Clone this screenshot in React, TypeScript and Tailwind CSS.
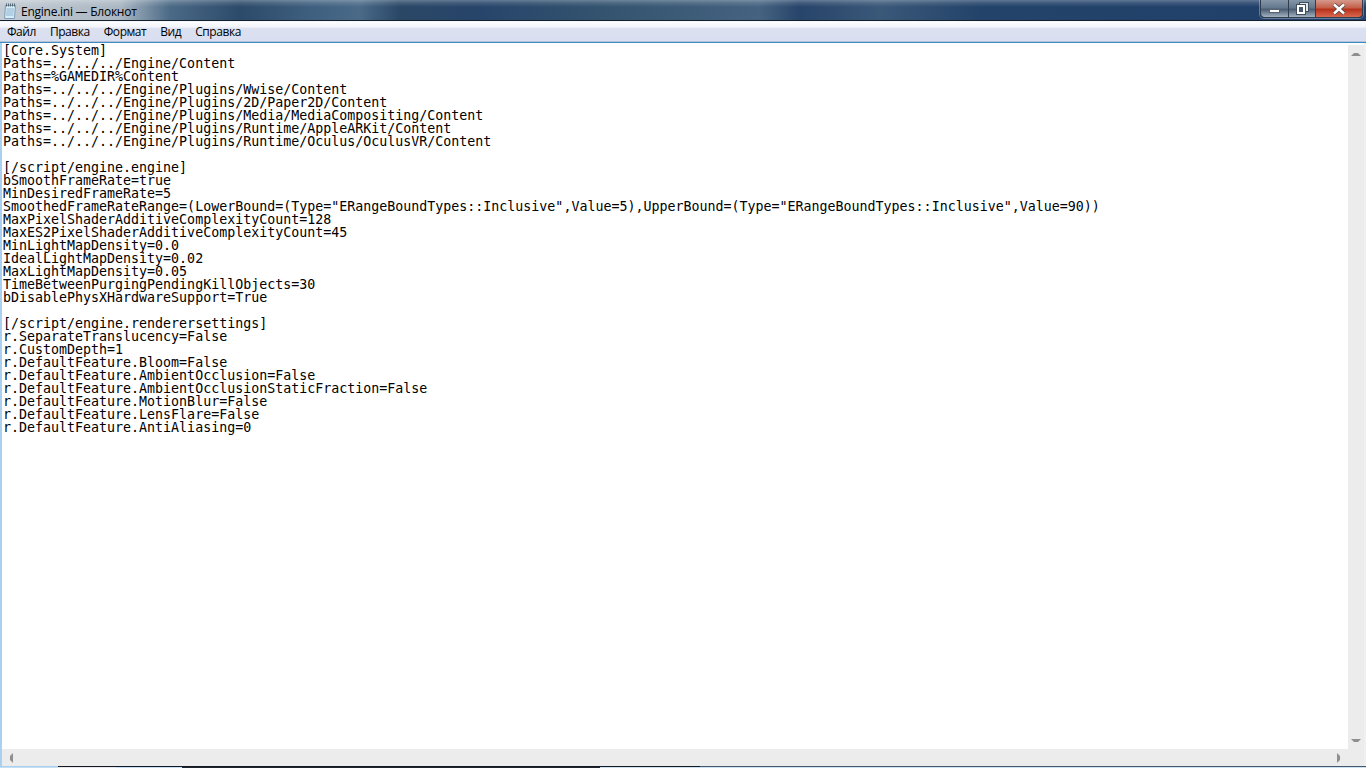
import { Fragment } from 'react';

const menuItems = ['Файл', 'Правка', 'Формат', 'Вид', 'Справка'];

const fileText = `[Core.System]
Paths=../../../Engine/Content
Paths=%GAMEDIR%Content
Paths=../../../Engine/Plugins/Wwise/Content
Paths=../../../Engine/Plugins/2D/Paper2D/Content
Paths=../../../Engine/Plugins/Media/MediaCompositing/Content
Paths=../../../Engine/Plugins/Runtime/AppleARKit/Content
Paths=../../../Engine/Plugins/Runtime/Oculus/OculusVR/Content

[/script/engine.engine]
bSmoothFrameRate=true
MinDesiredFrameRate=5
SmoothedFrameRateRange=(LowerBound=(Type="ERangeBoundTypes::Inclusive",Value=5),UpperBound=(Type="ERangeBoundTypes::Inclusive",Value=90))
MaxPixelShaderAdditiveComplexityCount=128
MaxES2PixelShaderAdditiveComplexityCount=45
MinLightMapDensity=0.0
IdealLightMapDensity=0.02
MaxLightMapDensity=0.05
TimeBetweenPurgingPendingKillObjects=30
bDisablePhysXHardwareSupport=True

[/script/engine.renderersettings]
r.SeparateTranslucency=False
r.CustomDepth=1
r.DefaultFeature.Bloom=False
r.DefaultFeature.AmbientOcclusion=False
r.DefaultFeature.AmbientOcclusionStaticFraction=False
r.DefaultFeature.MotionBlur=False
r.DefaultFeature.LensFlare=False
r.DefaultFeature.AntiAliasing=0`;

function NotepadIcon() {
  return (
    <svg width="15" height="16" viewBox="0 0 15 16" className="shrink-0">
      <path d="M2.5 2.5h10l-1 13h-10z" fill="#d5ecf8" stroke="#7f9db9" />
      <path d="M3.5 6h7.5M3.5 8h7.5M3 10h7.5M3 12h7.5" stroke="#8fb3cf" strokeWidth="1" />
      <path d="M3.5 0.5v3M5.5 0.5v3M7.5 0.5v3M9.5 0.5v3M11.5 0.5v3" stroke="#56697a" strokeWidth="1" />
    </svg>
  );
}

function WindowButtons() {
  return (
    <div className="flex h-[18px] w-[103px] shrink-0 rounded-b-[4px] border border-t-0 border-[#2f3d4c] shadow-[0_0_0_1px_rgba(255,255,255,0.3)]">
      <div className="flex w-[28px] items-end justify-center rounded-bl-[4px] border-r border-[#2f3d4c] bg-[linear-gradient(#8496a8,#64788e_45%,#4a5d73_55%,#a3b2c0)] pb-[4px]">
        <div className="h-[4px] w-[11px] border border-[#56646f] bg-white" />
      </div>
      <div className="flex w-[27px] items-center justify-center border-r border-[#2f3d4c] bg-[linear-gradient(#8496a8,#64788e_45%,#4a5d73_55%,#a3b2c0)]">
        <svg width="13" height="13" viewBox="0 0 13 13">
          <rect x="3.5" y="0.5" width="9" height="9" fill="#dfe5ea" stroke="#3f4d5c" />
          <rect x="0.5" y="2.5" width="9" height="10" fill="#ffffff" stroke="#3f4d5c" />
          <rect x="3" y="5" width="4" height="5" fill="#46586d" />
        </svg>
      </div>
      <div className="flex flex-1 items-center justify-center rounded-br-[4px] bg-[linear-gradient(#d6998c,#c4604b_45%,#b8321b_55%,#d9694f)]">
        <svg width="14" height="12" viewBox="0 0 14 12">
          <path d="M2 1.5 12 10.5M12 1.5 2 10.5" stroke="#4a4a4a" strokeWidth="4" />
          <path d="M2 1.5 12 10.5M12 1.5 2 10.5" stroke="#ffffff" strokeWidth="2.4" />
        </svg>
      </div>
    </div>
  );
}

function ArrowButton({ dir }: { dir: 'up' | 'down' | 'left' | 'right' }) {
  const paths = {
    up: 'M1 5 4 2 8 2 11 5Z',
    down: 'M1 1 11 1 8 4 4 4Z',
    left: 'M5 1 5 11 2 8 2 4Z',
    right: 'M1 1 1 11 4 8 4 4Z',
  };
  const vertical = dir === 'up' || dir === 'down';
  return (
    <svg width={vertical ? 12 : 6} height={vertical ? 6 : 12} viewBox={vertical ? '0 0 12 6' : '0 0 6 12'}>
      <path d={paths[dir]} fill="#8f8f8f" />
    </svg>
  );
}

export default function App() {
  return (
    <div className="flex h-[768px] w-[1366px] flex-col overflow-hidden bg-white font-['Open_Sans',sans-serif]">
      {/* title bar */}
      <div className="flex h-[20px] shrink-0 items-start justify-between bg-[linear-gradient(rgba(255,255,255,0.28),rgba(255,255,255,0.12)_15%,rgba(255,255,255,0)_35%),linear-gradient(90deg,#c3cbd3_0px,#aab7c3_120px,#4b6a86_170px,#2c4a6a_240px,#3f5f7f_310px,#4a6a88_360px,#2a4766_400px,#27456a_480px,#33536f_600px,#456380_760px,#27446a_800px,#3a5878_880px,#23436a_980px,#21406a_1366px)]">
        <div className="flex items-center gap-[3px] pl-[3px] pt-[3px]">
          <NotepadIcon />
          <span className="text-[12px] leading-[15px] text-black tracking-[-0.25px]">Engine.ini — Блокнот</span>
        </div>
        <div className="mr-[3px]">
          <WindowButtons />
        </div>
      </div>
      <div className="h-[2px] shrink-0 border-t border-[#15202c] bg-[#f3f6fb]" />

      {/* menu bar */}
      <div className="flex h-[19px] shrink-0 items-center gap-[14px] bg-[linear-gradient(#fbfcfe,#f3f5fb_25%,#dbe1f0_35%,#d9dff0)] pl-[7px] text-[12px] text-black">
        {menuItems.map((item) => (
          <span key={item} className="leading-[16px] tracking-[-0.45px]">{item}</span>
        ))}
      </div>
      <div className="h-[1px] shrink-0 bg-[#b6c2d6]" />
      <div className="h-[1px] shrink-0 bg-[#3f8ac4]" />

      {/* text + scrollbars */}
      <div className="flex min-h-0 flex-1 border-l-2 border-[#a9d0f0]">
        <div className="flex min-w-0 flex-1 flex-col">
          <div className="flex min-h-0 flex-1">
            <pre className="min-w-0 flex-1 overflow-hidden pl-[1px] pt-[1px] font-['DejaVu_Sans_Mono',monospace] text-[13.3px] leading-[13px] text-black">
              {fileText.split('\n').map((line, i) => (
                <Fragment key={i}>{line}{'\n'}</Fragment>
              ))}
            </pre>
            <div className="mt-[2px] flex w-[16px] shrink-0 flex-col items-center justify-between bg-[#ececec]">
              <div className="flex h-[17px] items-center justify-center"><ArrowButton dir="up" /></div>
              <div className="flex h-[17px] items-center justify-center"><ArrowButton dir="down" /></div>
            </div>
          </div>
          <div className="flex h-[17px] shrink-0 items-center justify-between bg-[#ececec] px-[6px] pr-[22px]">
            <ArrowButton dir="left" />
            <ArrowButton dir="right" />
          </div>
        </div>
        <div className="w-[2px] shrink-0 bg-[#f0f0f0]" />
      </div>

      {/* bottom edge */}
      <div className="flex h-[1px] shrink-0">
        <div className="w-[58px] bg-[#a9d0f0]" />
        <div className="w-[642px] bg-[#111a24]" />
        <div className="flex-1 bg-[#3f5a70]" />
      </div>
      <div className="flex h-[1px] shrink-0 bg-[#cfe0ee]">
        <div className="w-[58px] bg-[#c7dff2]" />
        <div className="w-[58px] bg-[#e8e8e8]" />
        <div className="w-[66px] bg-[#c7dff2]" />
        <div className="w-[418px] bg-[#20262c]" />
        <div className="flex-1" />
      </div>
    </div>
  );
}
